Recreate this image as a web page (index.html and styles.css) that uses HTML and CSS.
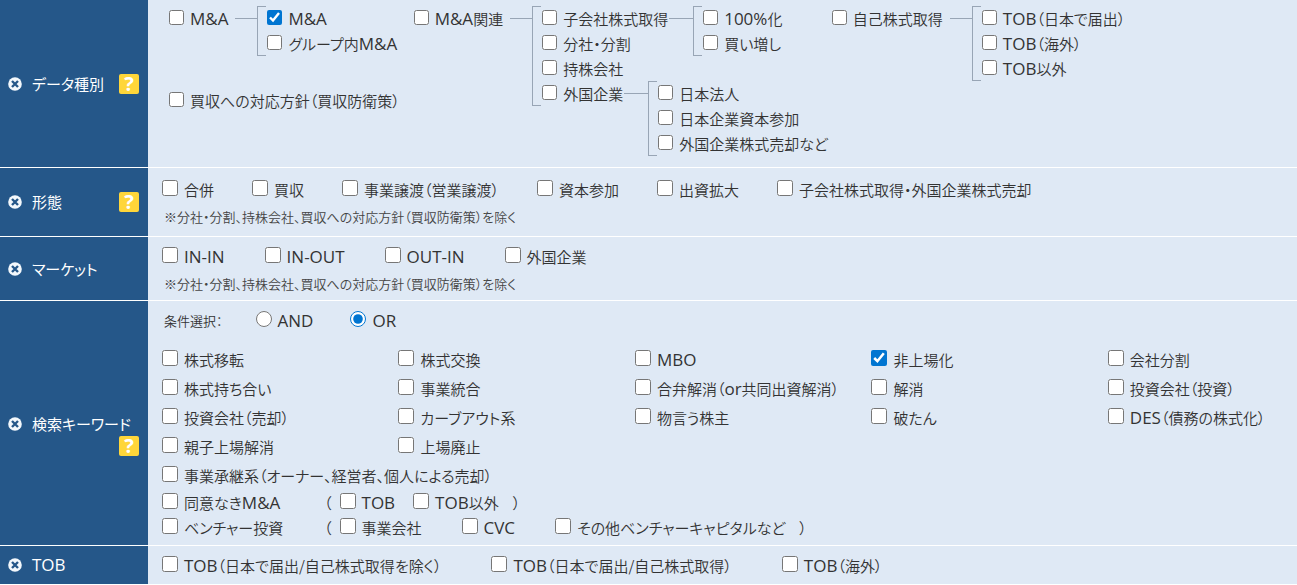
FILE: index.html
```html
<!DOCTYPE html>
<html lang="ja">
<head>
<meta charset="utf-8">
<meta name="viewport" content="width=device-width, initial-scale=1">
<title>検索条件</title>
<link rel="stylesheet" href="styles.css">
</head>
<body>
<svg class="defs" aria-hidden="true">
  <symbol id="clear" viewBox="0 0 14 14">
    <circle cx="7" cy="7" r="6.8" fill="#f3f8fc"/>
    <path d="M4 4 10 10M10 4 4 10" stroke="#255789" stroke-width="2.4" fill="none"/>
  </symbol>
</svg>
<form class="search">
  <section class="row">
    <div class="side">
      <button type="button" class="clear" aria-label="クリア"><svg><use href="#clear"/></svg></button>
      <h2 class="title">データ種別</h2>
      <button type="button" class="help">?</button>
    </div>
    <div class="cell cell-tree">
      <div class="trees">
        <div class="stack">
          <div class="node">
            <label class="check"><input type="checkbox"><span><span class="en">M&amp;A</span></span></label>
            <span class="link"></span>
            <ul class="branch">
              <li><label class="check"><input type="checkbox" checked><span><span class="en">M&amp;A</span></span></label></li>
              <li><label class="check"><input type="checkbox"><span>グループ内<span class="en">M&amp;A</span></span></label></li>
            </ul>
          </div>
          <label class="check"><input type="checkbox"><span>買収への対応方針（買収防衛策）</span></label>
        </div>
        <div class="node">
          <label class="check"><input type="checkbox"><span><span class="en">M&amp;A</span>関連</span></label>
          <span class="link"></span>
          <ul class="branch">
            <li class="inner">
              <label class="check"><input type="checkbox"><span>子会社株式取得</span></label>
              <span class="link"></span>
              <ul class="branch">
                <li><label class="check"><input type="checkbox"><span><span class="en">100%</span>化</span></label></li>
                <li><label class="check"><input type="checkbox"><span>買い増し</span></label></li>
              </ul>
            </li>
            <li><label class="check"><input type="checkbox"><span>分社・分割</span></label></li>
            <li><label class="check"><input type="checkbox"><span>持株会社</span></label></li>
            <li class="inner">
              <label class="check"><input type="checkbox"><span>外国企業</span></label>
              <span class="link"></span>
              <ul class="branch">
                <li><label class="check"><input type="checkbox"><span>日本法人</span></label></li>
                <li><label class="check"><input type="checkbox"><span>日本企業資本参加</span></label></li>
                <li><label class="check"><input type="checkbox"><span>外国企業株式売却など</span></label></li>
              </ul>
            </li>
          </ul>
        </div>
        <div class="node">
          <label class="check"><input type="checkbox"><span>自己株式取得</span></label>
          <span class="link"></span>
          <ul class="branch">
            <li><label class="check"><input type="checkbox"><span><span class="en">TOB</span>（日本で届出）</span></label></li>
            <li><label class="check"><input type="checkbox"><span><span class="en">TOB</span>（海外）</span></label></li>
            <li><label class="check"><input type="checkbox"><span><span class="en">TOB</span>以外</span></label></li>
          </ul>
        </div>
      </div>
    </div>
  </section>

  <section class="row">
    <div class="side">
      <button type="button" class="clear" aria-label="クリア"><svg><use href="#clear"/></svg></button>
      <h2 class="title">形態</h2>
      <button type="button" class="help">?</button>
    </div>
    <div class="cell cell-form">
      <div class="line">
        <label class="check"><input type="checkbox"><span>合併</span></label>
        <label class="check"><input type="checkbox"><span>買収</span></label>
        <label class="check"><input type="checkbox"><span>事業譲渡（営業譲渡）</span></label>
        <label class="check"><input type="checkbox"><span>資本参加</span></label>
        <label class="check"><input type="checkbox"><span>出資拡大</span></label>
        <label class="check"><input type="checkbox"><span>子会社株式取得・外国企業株式売却</span></label>
      </div>
      <p class="note">※分社・分割、持株会社、買収への対応方針（買収防衛策）を除く</p>
    </div>
  </section>

  <section class="row">
    <div class="side">
      <button type="button" class="clear" aria-label="クリア"><svg><use href="#clear"/></svg></button>
      <h2 class="title">マーケット</h2>
    </div>
    <div class="cell">
      <div class="line line-market">
        <label class="check"><input type="checkbox"><span class="en">IN-IN</span></label>
        <label class="check"><input type="checkbox"><span class="en">IN-OUT</span></label>
        <label class="check"><input type="checkbox"><span class="en">OUT-IN</span></label>
        <label class="check"><input type="checkbox"><span>外国企業</span></label>
      </div>
      <p class="note">※分社・分割、持株会社、買収への対応方針（買収防衛策）を除く</p>
    </div>
  </section>

  <section class="row">
    <div class="side side-wrap">
      <button type="button" class="clear" aria-label="クリア"><svg><use href="#clear"/></svg></button>
      <h2 class="title">検索キーワード</h2>
      <button type="button" class="help">?</button>
    </div>
    <div class="cell cell-keywords">
      <div class="line mode">
        <span class="caption">条件選択：</span>
        <label class="check"><input type="radio" name="mode"><span class="en">AND</span></label>
        <label class="check"><input type="radio" name="mode" checked><span class="en">OR</span></label>
      </div>
      <div class="keywords">
        <label class="check"><input type="checkbox"><span>株式移転</span></label>
        <label class="check"><input type="checkbox"><span>株式交換</span></label>
        <label class="check"><input type="checkbox"><span class="en">MBO</span></label>
        <label class="check"><input type="checkbox" checked><span>非上場化</span></label>
        <label class="check"><input type="checkbox"><span>会社分割</span></label>
        <label class="check"><input type="checkbox"><span>株式持ち合い</span></label>
        <label class="check"><input type="checkbox"><span>事業統合</span></label>
        <label class="check"><input type="checkbox"><span>合弁解消（<span class="en">or</span>共同出資解消）</span></label>
        <label class="check"><input type="checkbox"><span>解消</span></label>
        <label class="check"><input type="checkbox"><span>投資会社（投資）</span></label>
        <label class="check"><input type="checkbox"><span>投資会社（売却）</span></label>
        <label class="check"><input type="checkbox"><span>カーブアウト系</span></label>
        <label class="check"><input type="checkbox"><span>物言う株主</span></label>
        <label class="check"><input type="checkbox"><span>破たん</span></label>
        <label class="check"><input type="checkbox"><span><span class="en">DES</span>（債務の株式化）</span></label>
        <label class="check"><input type="checkbox"><span>親子上場解消</span></label>
        <label class="check"><input type="checkbox"><span>上場廃止</span></label>
        <label class="check wide"><input type="checkbox"><span>事業承継系（オーナー、経営者、個人による売却）</span></label>
      </div>
      <div class="sub">
        <label class="check"><input type="checkbox"><span>同意なき<span class="en">M&amp;A</span></span></label>
        <div class="group near">
          <span class="paren">（</span>
          <label class="check"><input type="checkbox"><span class="en">TOB</span></label>
          <label class="check"><input type="checkbox"><span><span class="en">TOB</span>以外</span></label>
          <span class="paren">）</span>
        </div>
        <label class="check"><input type="checkbox"><span>ベンチャー投資</span></label>
        <div class="group">
          <span class="paren">（</span>
          <label class="check"><input type="checkbox"><span>事業会社</span></label>
          <label class="check"><input type="checkbox"><span class="en">CVC</span></label>
          <label class="check"><input type="checkbox"><span>その他ベンチャーキャピタルなど</span></label>
          <span class="paren">）</span>
        </div>
      </div>
    </div>
  </section>

  <section class="row">
    <div class="side">
      <button type="button" class="clear" aria-label="クリア"><svg><use href="#clear"/></svg></button>
      <h2 class="title"><span class="en">TOB</span></h2>
    </div>
    <div class="cell">
      <div class="line line-tob">
        <label class="check"><input type="checkbox"><span><span class="en">TOB</span>（日本で届出/自己株式取得を除く）</span></label>
        <label class="check"><input type="checkbox"><span><span class="en">TOB</span>（日本で届出/自己株式取得）</span></label>
        <label class="check"><input type="checkbox"><span><span class="en">TOB</span>（海外）</span></label>
      </div>
    </div>
  </section>
</form>
</body>
</html>
```
FILE: styles.css
```css
* { box-sizing: border-box; }

body {
  margin: 0;
  background: #dfe9f5;
  color: #333;
  font-family: "Noto Sans CJK JP", sans-serif;
  font-size: 15px;
  font-weight: 350;
  line-height: 24px;
  font-feature-settings: "palt";
  overflow-x: hidden;
}

.defs { display: none; }

/* Latin words are set larger than the Japanese text around them */
.en {
  font-family: "Open Sans", sans-serif;
  font-size: 17px;
  font-weight: 400;
  line-height: 20px;
}

.row {
  display: grid;
  grid-template-columns: 148px 1fr;
  border-bottom: 1px solid #fff;
}

.side {
  display: flex;
  align-items: center;
  padding: 0 9px 0 8px;
  background: #255789;
  color: #fff;
}

.side-wrap {
  flex-wrap: wrap;
  align-content: center;
  padding-top: 22px;
}

.side-wrap .title { margin-right: -9px; }

.clear {
  width: 14px;
  height: 14px;
  margin: 0 10px 0 0;
  padding: 0;
  border: 0;
  background: none;
}

.clear svg {
  display: block;
  width: 14px;
  height: 14px;
}

.title {
  margin: 0;
  font-size: 15px;
  font-weight: 400;
  white-space: nowrap;
}

.help {
  width: 20px;
  height: 20px;
  margin-left: auto;
  padding: 0;
  border: 0;
  border-radius: 2px;
  background: #ffd63a;
  color: #fff;
  font: bold 20px/20px "Noto Sans", sans-serif;
}

.cell {
  padding: 8px 0 6px 14px;
  white-space: nowrap;
}

.cell-tree { padding: 6px 0 54px 21px; }

.cell-form { padding: 10px 0 9px 14px; }

.cell-keywords { padding-bottom: 5px; }

.check {
  display: inline-flex;
  align-items: center;
}

.check input {
  flex: none;
  width: 16px;
  height: 16px;
  margin: 0 6px 4px 0;
  accent-color: #0075d1;
}

.line {
  display: flex;
  height: 24px;
  gap: 38px;
}

.line-market { gap: 40px; }

.line-tob { gap: 50px; }

.note {
  margin: 5px 0 0 2px;
  color: #444;
  font-size: 13px;
  line-height: 20px;
}

/* Category trees */
.trees {
  display: flex;
  align-items: flex-start;
}

.trees > :nth-child(1) { margin-right: 14px; }
.trees > :nth-child(2) { margin-right: 4px; }

.trees .check { height: 25px; }

.trees .check input {
  width: 15px;
  height: 15px;
  margin-bottom: 2px;
}

.stack {
  display: flex;
  flex-direction: column;
  align-items: flex-start;
  gap: 32px;
}

.node,
.inner {
  display: flex;
  align-items: flex-start;
}

.link {
  flex: none;
  width: 22px;
  margin: 12px 0 0 7px;
  border-top: 1px solid #98a5b5;
}

.inner > .link {
  width: 24px;
  margin-left: 1px;
}

.branch {
  margin: 0;
  padding: 0 0 0 10px;
  list-style: none;
  background:
    linear-gradient(#98a5b5, #98a5b5) 0 0 / 9px 1px no-repeat,
    linear-gradient(#98a5b5, #98a5b5) 0 100% / 9px 1px no-repeat,
    linear-gradient(#98a5b5, #98a5b5) 0 0 / 1px 100% no-repeat;
}

.branch li { height: 25px; }

/* Keywords */
.mode { gap: 37px; }

.caption {
  margin-right: -4px;
  padding-left: 2px;
  font-size: 13px;
}

.keywords {
  display: grid;
  grid-template-columns: repeat(4, 5fr) 4fr;
  grid-auto-rows: 29px;
  margin-top: 12px;
}

.keywords .wide { grid-column: 1 / -1; }

.sub {
  display: grid;
  grid-template-columns: 162px 1fr;
  grid-auto-rows: 25px;
}

.group {
  display: flex;
  align-items: center;
  gap: 40px;
}

.group.near { gap: 18px; }

.paren:first-child { margin-right: -32px; }
.group .paren:last-child { margin-left: -26px; }
.near .paren:first-child { margin-right: -10px; }
.near .paren:last-child { margin-left: -4px; }
```
